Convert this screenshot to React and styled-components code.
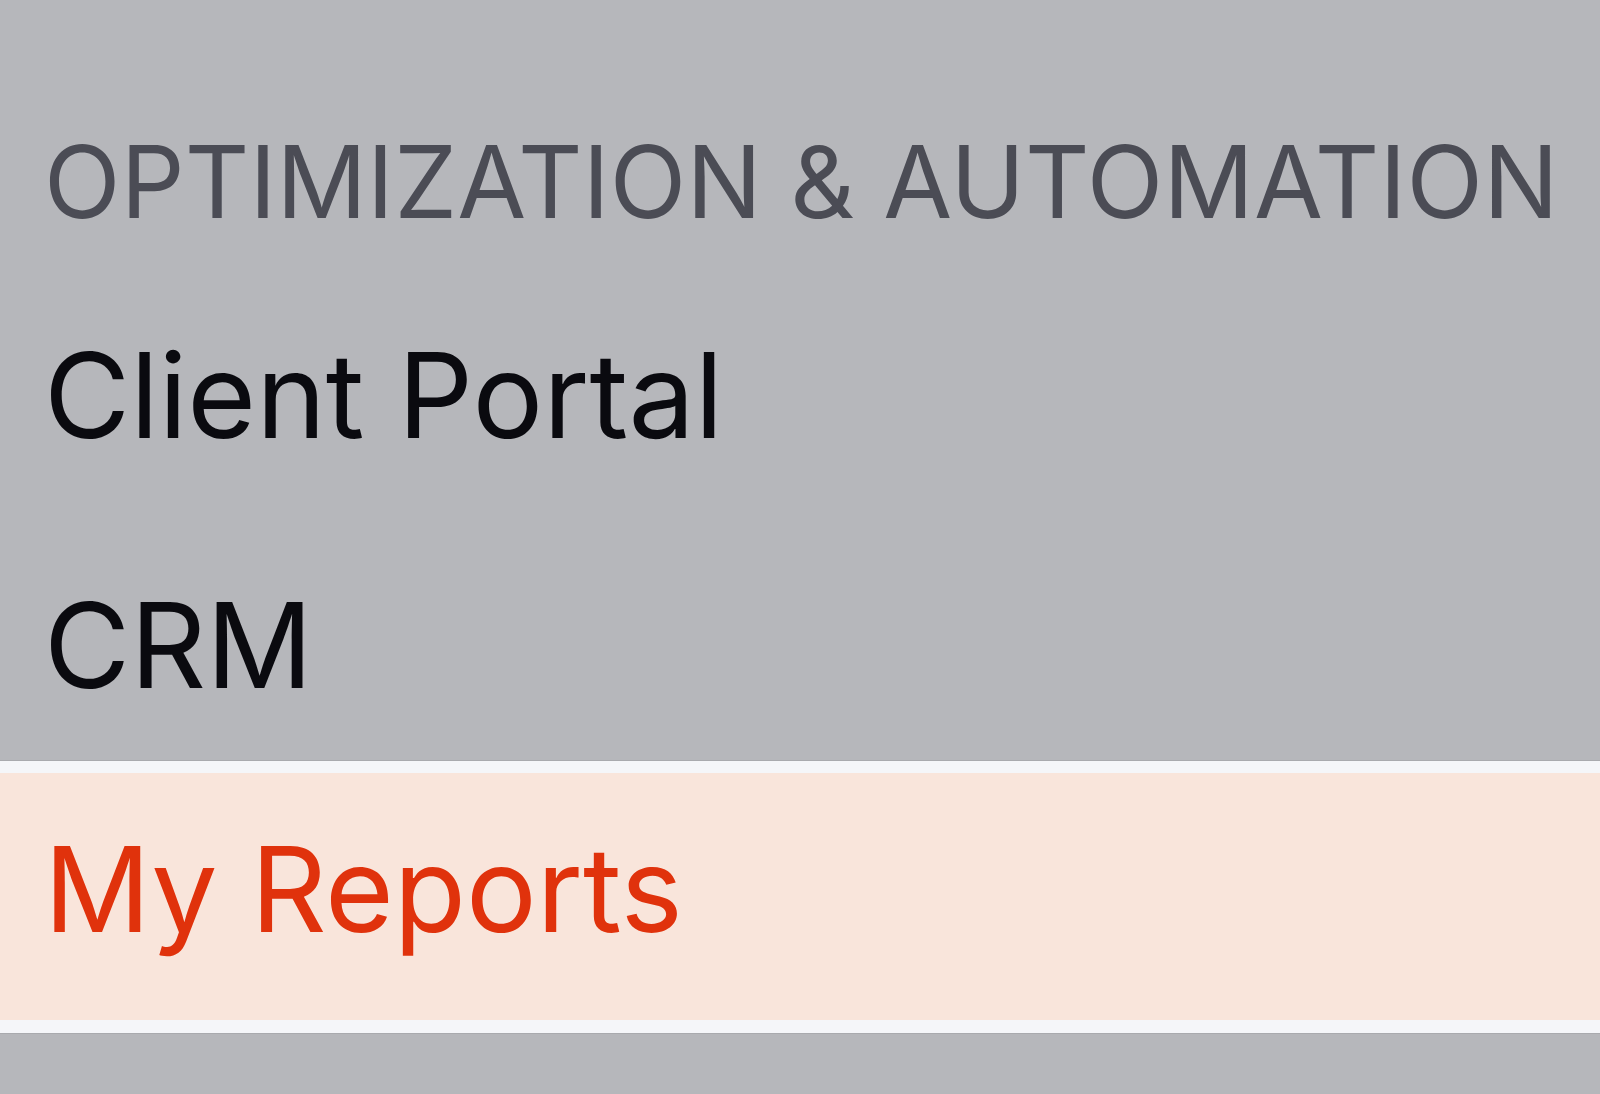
import * as React from "react"
import styled, { createGlobalStyle } from "styled-components"

const items = [
  { name: "Client Portal" },
  { name: "CRM" },
  { name: "My Reports", selected: true },
]

const GlobalStyle = createGlobalStyle`
  html, body {
    margin: 0;
    padding: 0;
    background: #b6b7bb;
    font-family: Inter, "Noto Sans", sans-serif;
  }
`

const App = () => {
  return (
    <>
      <GlobalStyle />
      <StMenu>
        <StSectionTitle>OPTIMIZATION &amp; AUTOMATION</StSectionTitle>
        <StList>
          {items.map(({ name, selected }) => (
            <StItem key={name} $selected={selected}>
              {name}
            </StItem>
          ))}
        </StList>
      </StMenu>
    </>
  )
}
export default App

const StMenu = styled.nav`
  width: 100%;
  min-height: 1094px;
  background: #b6b7bb;
`
const StSectionTitle = styled.h2`
  margin: 0;
  padding: 132px 44px 29px;
  font-size: 100px;
  line-height: 100px;
  font-weight: 400;
  letter-spacing: 0.2px;
  color: #4b4c55;
  white-space: nowrap;
`
const StList = styled.ul`
  list-style: none;
  margin: 0;
  padding: 0;
`
const StItem = styled.li`
  font-size: 118px;
  line-height: 118px;
  font-weight: 400;
  white-space: nowrap;
  padding: 75px 44px 57px;
  color: #0a0a0f;
  ${props =>
    props.$selected
      ? `
    padding: 57px 44px 72px;
    color: #e0320c;
    background: #f9e5db;
    border-top: 12px solid #f5f6f9;
    border-bottom: 13px solid #f5f6f9;
    box-shadow: 0 -1px 0 #a9aaae, 0 1px 0 #a9aaae;
  `
      : ""}
`
